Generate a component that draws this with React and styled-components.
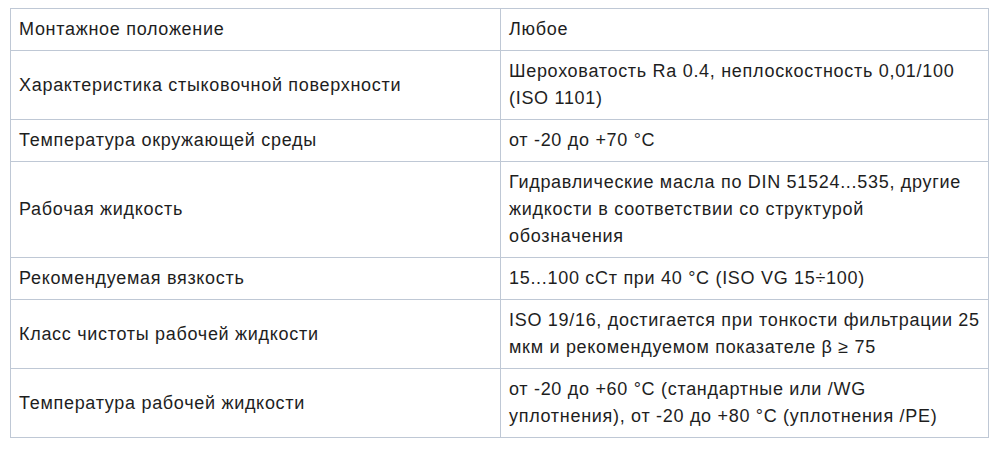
import React from 'react';
import styled, { createGlobalStyle } from 'styled-components';

const GlobalStyle = createGlobalStyle`
    body {
        margin: 0;
        background: #ffffff;
    }
`;

const rows = [
    ["Монтажное положение", ["Любое"]],
    ["Характеристика стыковочной поверхности", ["Шероховатость Ra 0.4, неплоскостность 0,01/100", "(ISO 1101)"]],
    ["Температура окружающей среды", ["от -20 до +70 °C"]],
    ["Рабочая жидкость", ["Гидравлические масла по DIN 51524...535, другие", "жидкости в соответствии со структурой", "обозначения"]],
    ["Рекомендуемая вязкость", ["15...100 сСт при 40 °C (ISO VG 15÷100)"]],
    ["Класс чистоты рабочей жидкости", ["ISO 19/16, достигается при тонкости фильтрации 25", "мкм и рекомендуемом показателе β ≥ 75"]],
    ["Температура рабочей жидкости", ["от -20 до +60 °C (стандартные или /WG", "уплотнения), от -20 до +80 °C (уплотнения /PE)"]]
];

const Wrapper = styled.div`
    padding: 8px 9px 0 10px;
`;

const SpecTable = styled.table`
    width: 979px;
    table-layout: fixed;
    border-collapse: collapse;
    font-family: "Liberation Sans", Arial, sans-serif;
    font-size: 18px;
    letter-spacing: 0.7px;
    line-height: 27px;
    color: #1e1e1e;
`;

const Cell = styled.td`
    border: 1px solid #bfc8d5;
    padding: 7px 8px;
    vertical-align: middle;
    text-align: left;
    white-space: nowrap;
`;

const App = () => {
    return (
        <Wrapper>
            <GlobalStyle />
            <SpecTable>
                <colgroup>
                    <col style={{ width: 490 }} />
                    <col />
                </colgroup>
                <tbody>
                    {
                        rows.map(([label, value]) => (
                            <tr key={label}>
                                <Cell>{label}</Cell>
                                <Cell>
                                    {value.map((line, i) => (
                                        <React.Fragment key={i}>
                                            {i > 0 && <br />}
                                            {line}
                                        </React.Fragment>
                                    ))}
                                </Cell>
                            </tr>
                        ))
                    }
                </tbody>
            </SpecTable>
        </Wrapper>
    );
}

export default App;
